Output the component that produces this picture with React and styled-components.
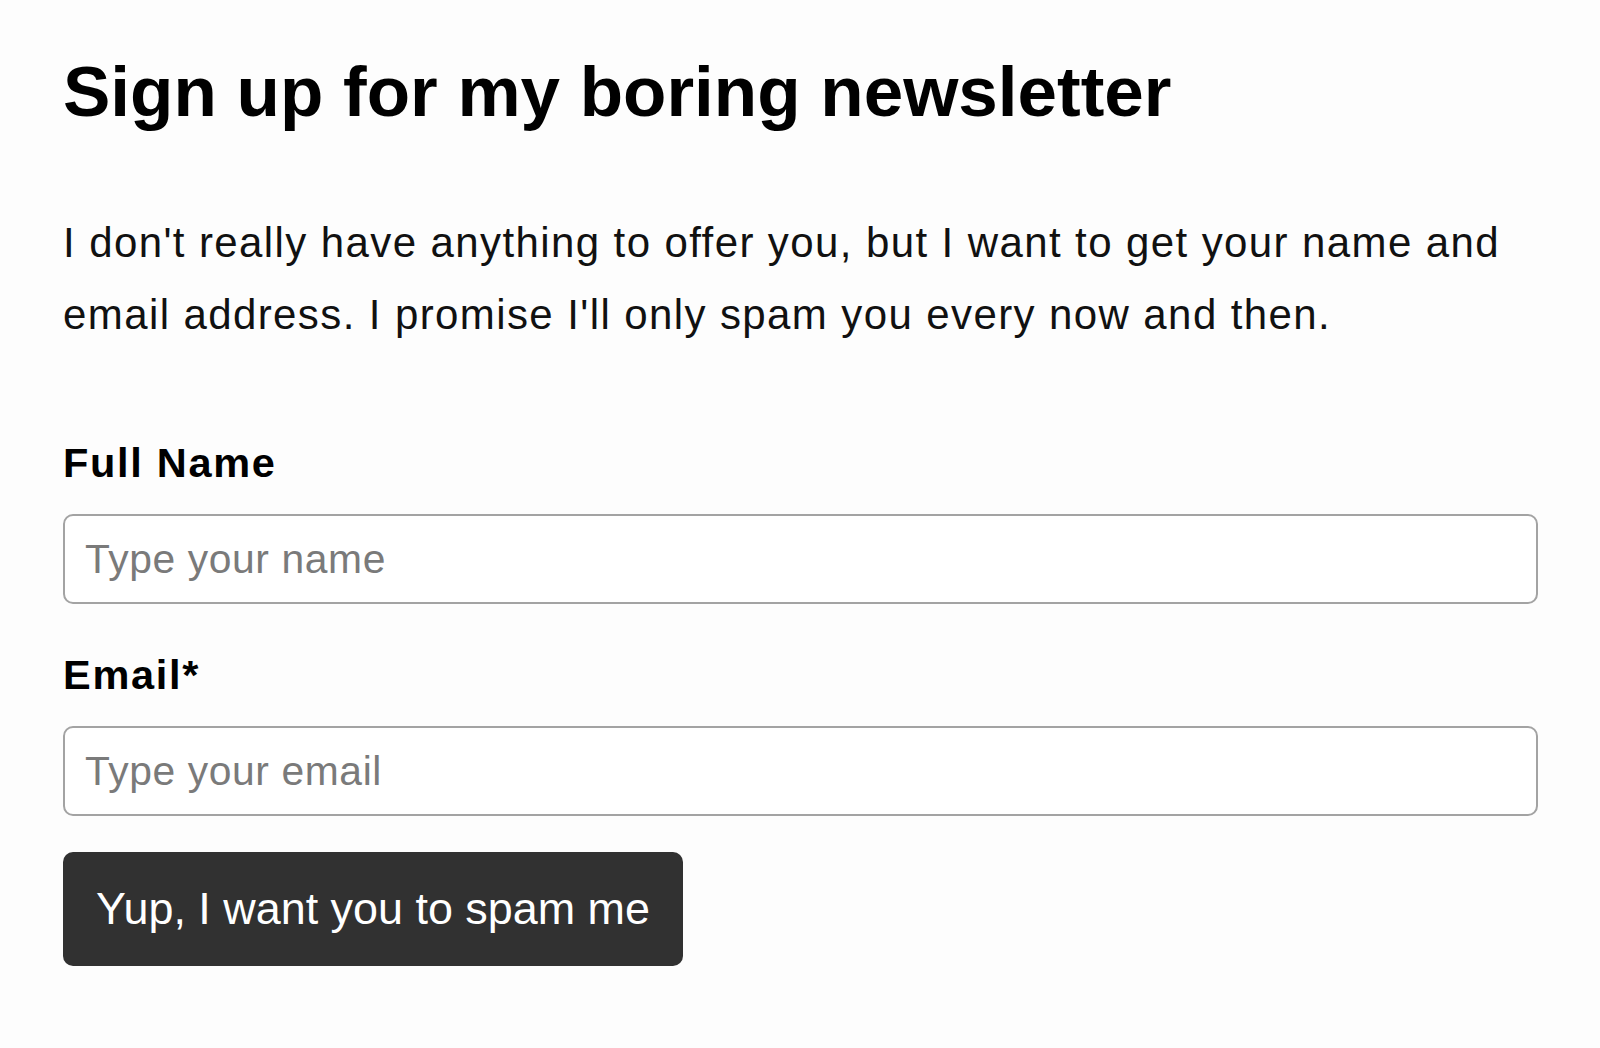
import React from "react";
import styled, { createGlobalStyle } from "styled-components";

const GlobalStyle = createGlobalStyle`
  html, body {
    margin: 0;
    padding: 0;
    background: #fdfdfd;
  }
  body {
    font-family: "Liberation Sans", Arial, Helvetica, sans-serif;
    color: #111;
  }
`;

const Page = styled.main`
  padding: 49px 62px 60px 63px;
`;

const Title = styled.h1`
  margin: 0;
  font-size: 71px;
  line-height: 1.2;
  font-weight: 700;
  color: #000;
`;

const Intro = styled.p`
  margin: 73px 0 0;
  font-size: 42px;
  line-height: 71.4px;
  letter-spacing: 1.4px;
  color: #111;
`;

const Form = styled.form`
  display: flex;
  flex-direction: column;
  align-items: flex-start;
  margin-top: 88px;
`;

const Field = styled.div`
  display: flex;
  flex-direction: column;
  gap: 27px;
  width: 100%;
  margin-bottom: ${(p) => p.$after}px;
`;

const Label = styled.label`
  font-size: 41.5px;
  line-height: 49px;
  font-weight: 700;
  letter-spacing: 1.7px;
  color: #000;
`;

const Input = styled.input`
  box-sizing: border-box;
  width: 100%;
  height: 90px;
  margin: 0;
  padding: 0 20px;
  border: 2px solid #a3a3a3;
  border-radius: 10px;
  background: #fff;
  font-family: inherit;
  font-size: 40.8px;
  letter-spacing: 0.6px;
  color: #111;
  outline: none;

  &::placeholder {
    color: #7a7a7a;
  }
`;

const Button = styled.button`
  height: 114px;
  padding: 0 33px;
  border: none;
  border-radius: 10px;
  background: #313131;
  color: #fff;
  font-family: inherit;
  font-size: 44.9px;
  line-height: 1;
  cursor: pointer;
`;

export default function App() {
  return (
    <>
      <GlobalStyle />
      <Page>
        <Title>Sign up for my boring newsletter</Title>
        <Intro>
          I don't really have anything to offer you, but I want to get your name and
          email address. I promise I'll only spam you every now and then.
        </Intro>
        <Form onSubmit={(e) => e.preventDefault()}>
          <Field $after={46}>
            <Label htmlFor="name">Full Name</Label>
            <Input id="name" type="text" placeholder="Type your name" />
          </Field>
          <Field $after={36}>
            <Label htmlFor="email">Email*</Label>
            <Input id="email" type="email" placeholder="Type your email" />
          </Field>
          <Button type="submit">Yup, I want you to spam me</Button>
        </Form>
      </Page>
    </>
  );
}
